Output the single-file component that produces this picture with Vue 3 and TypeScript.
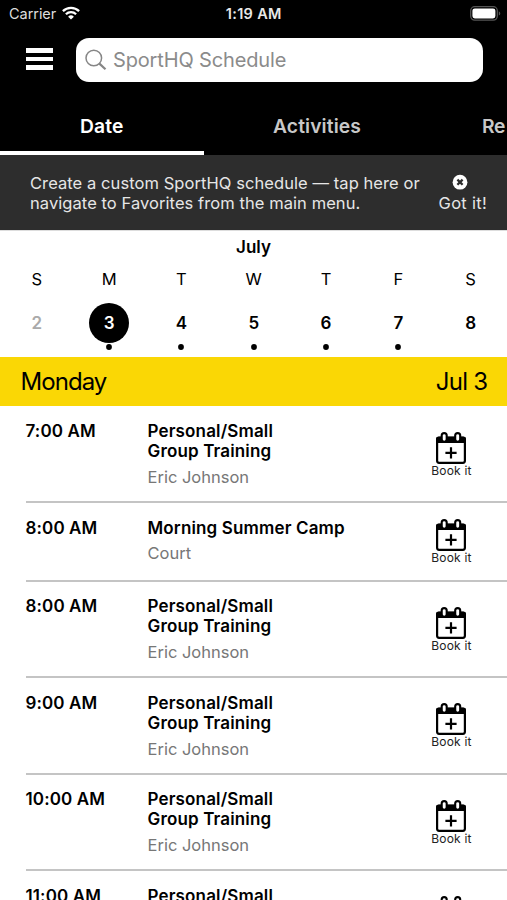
<script setup lang="ts">
interface Day {
  letter: string
  date: number
  past?: boolean
  selected?: boolean
  events?: boolean
}

interface Session {
  time: string
  title: string[]
  detail: string
}

const days: Day[] = [
  { letter: 'S', date: 2, past: true },
  { letter: 'M', date: 3, selected: true, events: true },
  { letter: 'T', date: 4, events: true },
  { letter: 'W', date: 5, events: true },
  { letter: 'T', date: 6, events: true },
  { letter: 'F', date: 7, events: true },
  { letter: 'S', date: 8 },
]

const training = ['Personal/Small', 'Group Training']

const sessions: Session[] = [
  { time: '7:00 AM', title: training, detail: 'Eric Johnson' },
  { time: '8:00 AM', title: ['Morning Summer Camp'], detail: 'Court' },
  { time: '8:00 AM', title: training, detail: 'Eric Johnson' },
  { time: '9:00 AM', title: training, detail: 'Eric Johnson' },
  { time: '10:00 AM', title: training, detail: 'Eric Johnson' },
  { time: '11:00 AM', title: ['Personal/Small'], detail: '' },
]
</script>

<template>
  <main class="screen">
    <header class="top">
      <div class="status">
        <div class="carrier">
          <span>Carrier</span>
          <svg class="wifi" viewBox="0 0 18 14" width="18" height="14">
            <g fill="none" stroke="#fff" stroke-width="2.3">
              <path d="M0.9 5.1a11.6 11.6 0 0 1 16.2 0" />
              <path d="M3.9 8.3a7.3 7.3 0 0 1 10.2 0" />
            </g>
            <path d="M9 13.6 6.1 10.7a4.1 4.1 0 0 1 5.8 0z" fill="#fff" />
          </svg>
        </div>
        <span class="clock">1:19 AM</span>
        <svg class="battery" viewBox="0 0 31 15" width="31" height="15">
          <rect x="0.7" y="0.7" width="26.6" height="13.4" rx="4" fill="none" stroke="#555" stroke-width="1.3" />
          <rect x="2.4" y="2.4" width="23" height="10" rx="2.4" fill="#fff" />
          <path d="M28.8 5.2c2 .8 2 3.6 0 4.4z" fill="#555" />
        </svg>
      </div>
      <div class="searchbar">
        <button class="burger" aria-label="Menu"><i /><i /><i /></button>
        <div class="search">
          <svg viewBox="0 0 22 22" width="22" height="22" fill="none" stroke="#868686">
            <circle cx="8.8" cy="9" r="7.8" stroke-width="1.5" />
            <path d="m14.4 14.6 6.1 5.7" stroke-width="2.2" />
          </svg>
          <span>SportHQ Schedule</span>
        </div>
      </div>
      <nav class="tabs">
        <span class="tab active">Date</span>
        <span class="tab">Activities</span>
        <span class="tab last">Re</span>
      </nav>
    </header>

    <section class="notice">
      <p>
        Create a custom SportHQ schedule — tap here or<br />
        navigate to Favorites from the main menu.
      </p>
      <div class="dismiss">
        <svg viewBox="0 0 16 20" width="16" height="20">
          <circle cx="8" cy="9.2" r="7.4" fill="#fff" />
          <path d="m5.4 6.6 5.2 5.2m0-5.2-5.2 5.2" stroke="#2d2d2d" stroke-width="2.3" />
        </svg>
        <span>Got it!</span>
      </div>
    </section>

    <section class="calendar">
      <h2>July</h2>
      <div class="week">
        <div v-for="day in days" :key="day.date" class="day">
          <span class="letter">{{ day.letter }}</span>
          <span class="date" :class="{ past: day.past, selected: day.selected }">{{ day.date }}</span>
          <svg v-if="day.events" class="dot" viewBox="0 0 8 8" width="8" height="8">
            <circle cx="4" cy="4" r="2.9" />
          </svg>
        </div>
      </div>
    </section>

    <div class="heading">
      <span class="h-day">Monday</span>
      <span class="h-date">Jul 3</span>
    </div>

    <ul class="sessions">
      <li v-for="(s, i) in sessions" :key="i" :class="{ short: s.title.length === 1 && s.detail }">
        <span class="time">{{ s.time }}</span>
        <div class="info">
          <div v-for="line in s.title" :key="line" class="title">{{ line }}</div>
          <div v-if="s.detail" class="detail">{{ s.detail }}</div>
        </div>
        <div class="book">
          <svg viewBox="0 0 30 32" width="30" height="32">
            <rect x="1.1" y="5.6" width="27.8" height="25.2" rx="2" fill="#fff" stroke="#000" stroke-width="2.2" />
            <path d="M0 11V7a2.2 2.2 0 0 1 2.2-2.2h25.6A2.2 2.2 0 0 1 30 7v4z" fill="#000" />
            <rect x="5.7" y="1.1" width="5" height="8.7" rx="2.5" fill="#fff" stroke="#000" stroke-width="2.1" />
            <rect x="19.2" y="1.1" width="5" height="8.7" rx="2.5" fill="#fff" stroke="#000" stroke-width="2.1" />
            <path d="M15 15.3v11.2M9.4 20.9h11.2" stroke="#000" stroke-width="2.2" />
          </svg>
          <span v-if="s.detail">Book it</span>
        </div>
      </li>
    </ul>
  </main>
</template>

<style>
body {
  margin: 0;
  overflow: hidden;
}
</style>

<style scoped>
.screen {
  width: 507px;
  height: 900px;
  overflow: hidden;
  background: #fff;
  color: #000;
  font-family: Inter, 'Liberation Sans', sans-serif;
  font-size: 16.5px;
}
.top {
  height: 155px;
  background: #000;
  color: #fff;
}
.status {
  height: 28px;
  display: grid;
  grid-template-columns: 1fr auto 1fr;
  align-items: center;
  padding: 0 6px 0 9px;
  box-sizing: border-box;
  font-size: 14.5px;
}
.carrier {
  display: flex;
  align-items: center;
  gap: 6px;
  padding-bottom: 1px;
  color: #ddd;
  letter-spacing: -0.05px;
}
.wifi {
  margin-top: -1px;
}
.clock {
  margin-right: 2.5px;
  padding-bottom: 1px;
  font-weight: 600;
  letter-spacing: 0.3px;
  color: #e8e8e8;
}
.battery {
  justify-self: end;
  margin-top: -1px;
}
.searchbar {
  display: flex;
  align-items: center;
  height: 44px;
  margin-top: 9.5px;
  padding: 0 24.5px 0 25.5px;
}
.burger {
  width: 27px;
  margin-top: -1px;
  padding: 0;
  border: 0;
  background: none;
  display: grid;
  gap: 4px;
}
.burger i {
  height: 4.8px;
  background: #fff;
}
.search {
  flex: 1;
  height: 44px;
  margin-left: 23px;
  padding-left: 9px;
  box-sizing: border-box;
  display: flex;
  align-items: center;
  gap: 6.5px;
  border-radius: 13px;
  background: #fff;
  color: #8b8b8b;
  font-size: 20px;
  letter-spacing: -0.15px;
}
.tabs {
  display: flex;
  height: 73.5px;
}
.tab {
  flex: none;
  width: 203.5px;
  box-sizing: border-box;
  padding-top: 32px;
  line-height: 24px;
  text-align: center;
  font-size: 19.3px;
  font-weight: 600;
  letter-spacing: 0.1px;
  color: #c8c8c8;
  border-bottom: 4px solid transparent;
}
.tab.active {
  color: #fff;
  border-bottom-color: #fff;
}
.tab:nth-child(2) {
  width: 227px;
}
.tab.last {
  width: 76.5px;
  padding-left: 51.5px;
  text-align: left;
  letter-spacing: -0.4px;
}
.notice {
  height: 75px;
  box-sizing: border-box;
  display: flex;
  justify-content: space-between;
  padding: 17.5px 20px 0 30px;
  background: #2d2d2d;
  color: #e6e6e6;
  line-height: 20.3px;
  letter-spacing: 0.07px;
}
.notice p {
  margin: 0;
  white-space: nowrap;
}
.dismiss {
  display: flex;
  flex-direction: column;
  align-items: center;
  white-space: nowrap;
  letter-spacing: 0.3px;
}
.dismiss svg {
  margin-right: 5px;
}
.calendar {
  height: 127.4px;
  box-sizing: border-box;
  padding-top: 6px;
  border-top: 1px solid #ddd;
}
.calendar h2 {
  margin: 0;
  font-size: 17px;
  line-height: 20px;
  font-weight: 600;
  text-align: center;
}
.week {
  display: grid;
  grid-template-columns: repeat(7, 72.3px);
  justify-content: center;
  padding-left: 0.5px;
}
.day {
  display: flex;
  flex-direction: column;
  align-items: center;
}
.letter {
  margin-top: 12px;
  line-height: 20px;
}
.date {
  width: 40px;
  height: 40px;
  margin-top: 13.5px;
  border-radius: 50%;
  line-height: 40px;
  text-align: center;
  font-size: 17px;
  font-weight: 600;
}
.past {
  color: #aaa;
}
.selected {
  background: #000;
  color: #fff;
}
.dot {
  margin-top: 0.3px;
}
.heading {
  height: 48.4px;
  display: flex;
  align-items: center;
  justify-content: space-between;
  padding: 0 19.5px 0 20.5px;
  background: #fad705;
  font-size: 24px;
}
.h-day {
  letter-spacing: -0.95px;
}
.h-date {
  letter-spacing: -0.7px;
}
.sessions {
  margin: 0;
  padding: 0.8px 0 0 25.5px;
  list-style: none;
}
.sessions li {
  display: flex;
  height: 96.6px;
  box-sizing: border-box;
  border-bottom: 2px solid #c4c4c4;
}
.sessions li.short {
  height: 78.4px;
}
.time {
  width: 122px;
  padding-top: 14.4px;
  line-height: 20.3px;
  font-size: 17px;
  font-weight: 600;
  letter-spacing: 0.12px;
}
.info {
  flex: 1;
  padding-top: 14.4px;
  line-height: 20.3px;
}
.title {
  font-size: 17px;
  font-weight: 600;
  letter-spacing: 0.15px;
}
.detail {
  margin-top: 5.5px;
  color: #777;
}
.book {
  width: 41px;
  margin-right: 35px;
  padding-top: 2px;
  display: flex;
  flex-direction: column;
  align-items: center;
  justify-content: center;
  font-size: 12px;
  line-height: 14px;
  letter-spacing: 0.2px;
  color: #222;
  white-space: nowrap;
}
.book svg {
  flex: none;
  margin-right: 2px;
}
.sessions li:last-child .book {
  justify-content: flex-start;
  padding-top: 25px;
}
</style>
